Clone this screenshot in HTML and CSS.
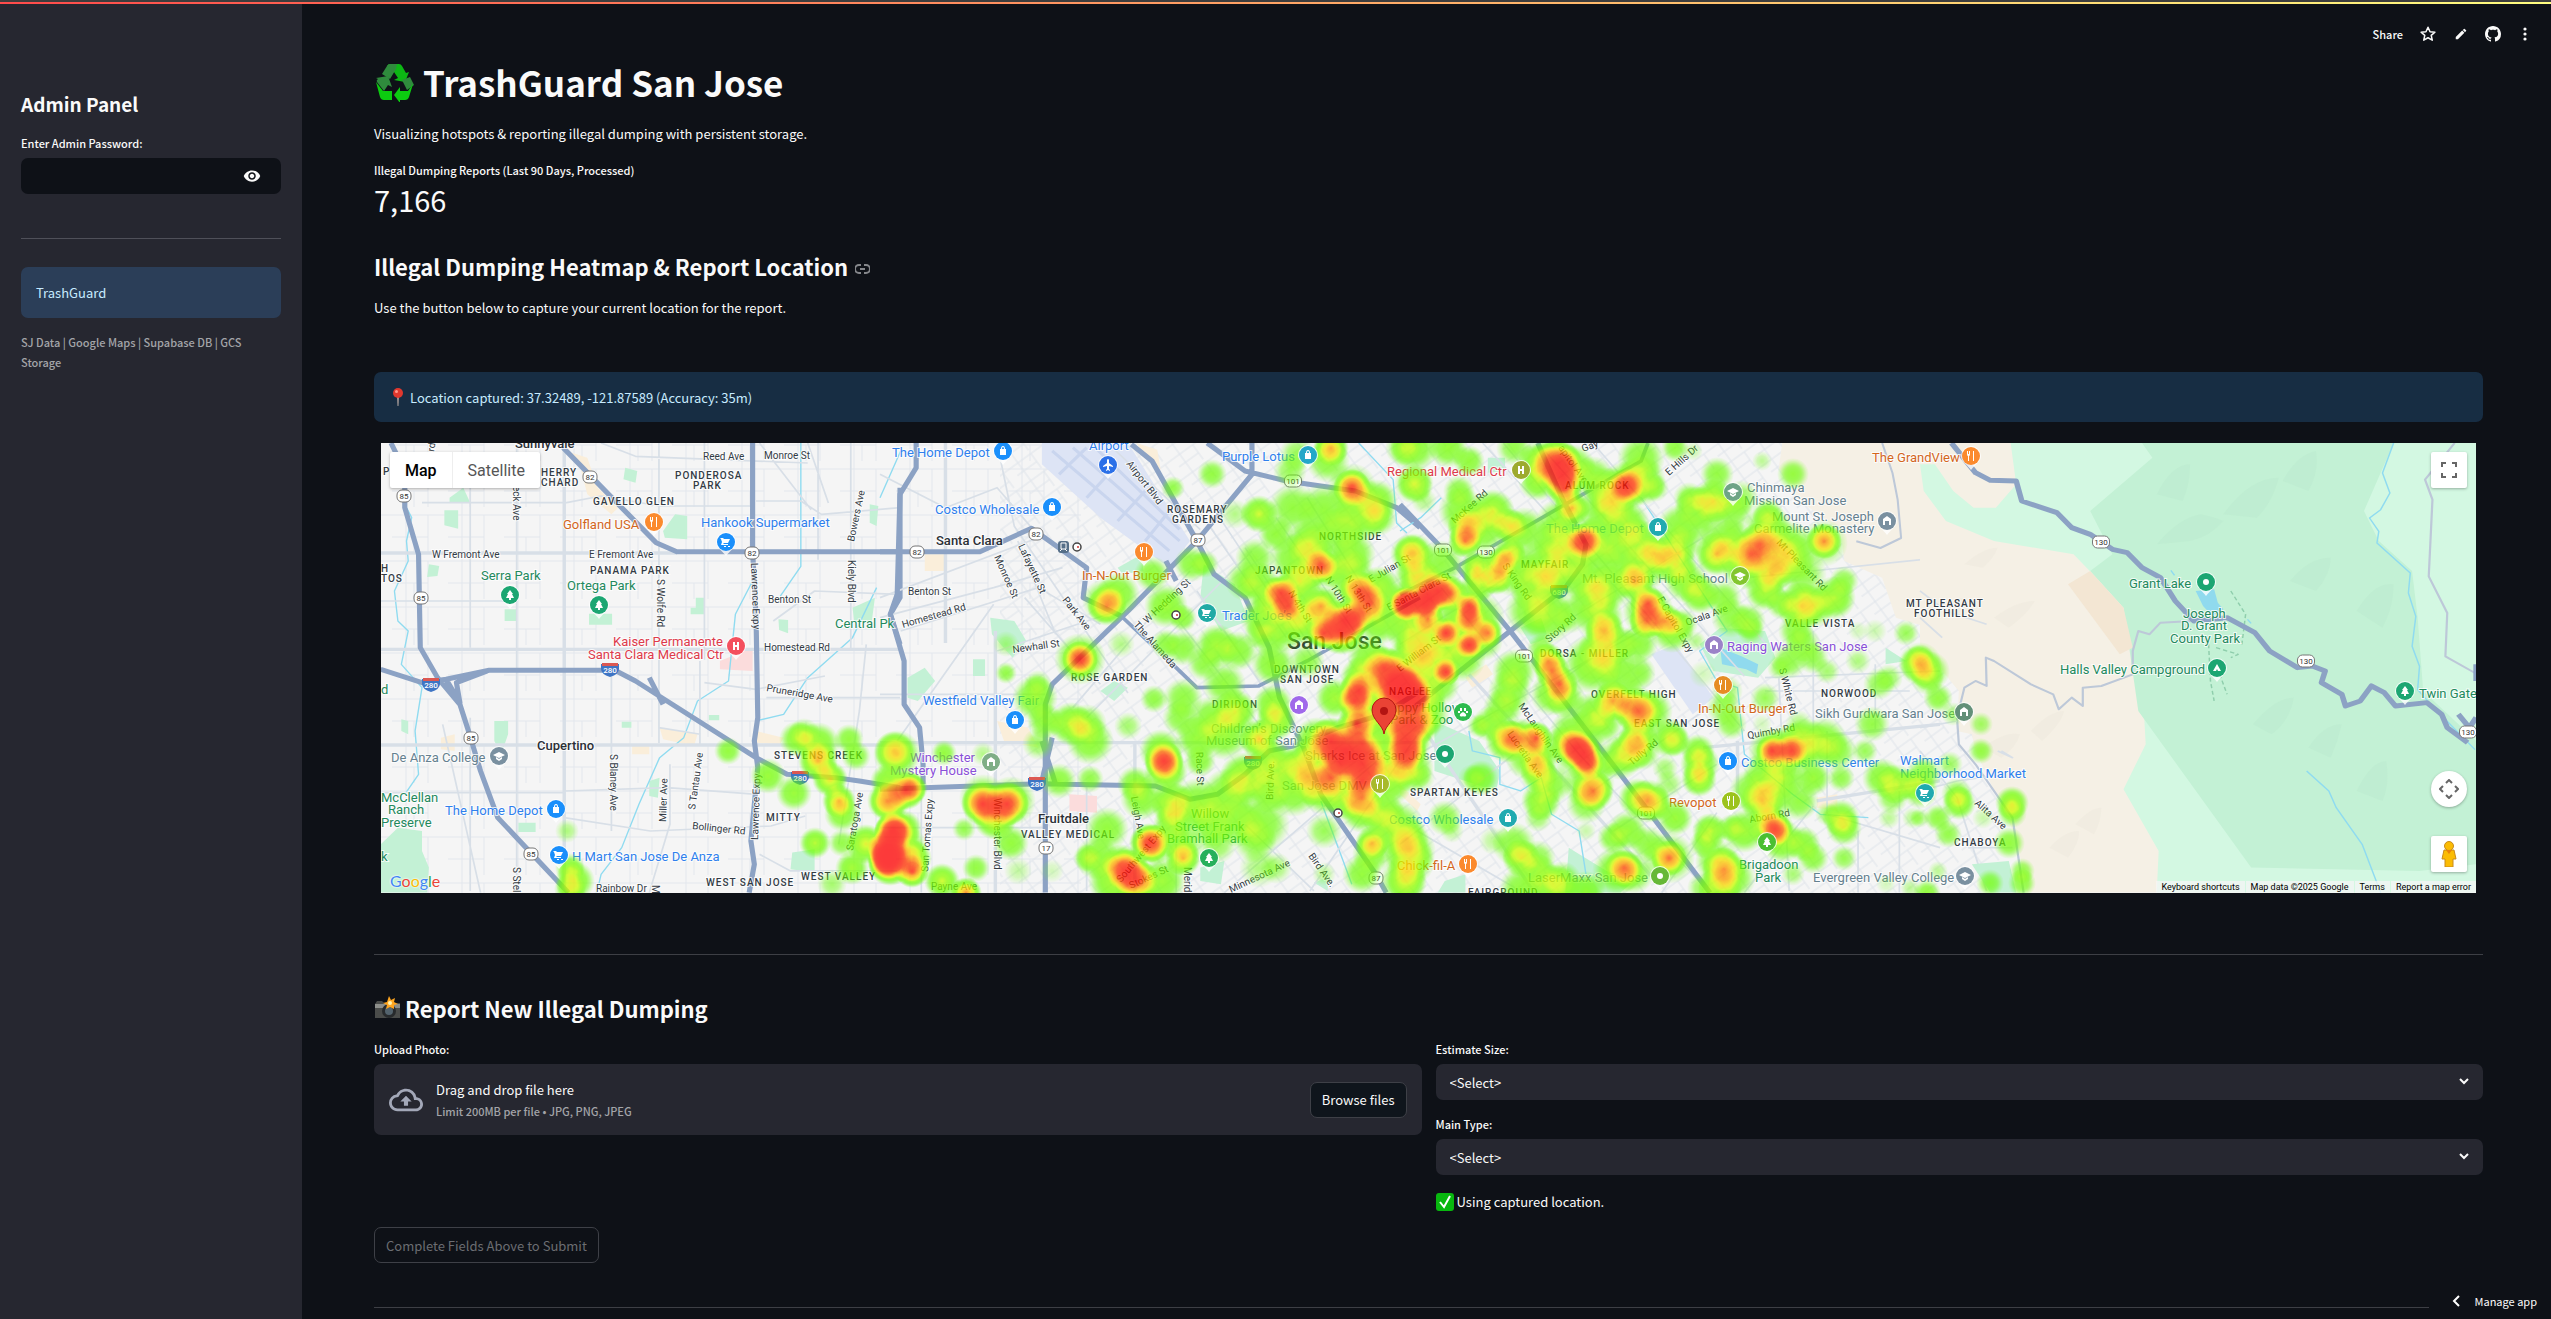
FILE: index.html
```html
<!DOCTYPE html>
<html lang="en">
<head>
<meta charset="utf-8">
<meta name="viewport" content="width=device-width, initial-scale=1">
<title>TrashGuard San Jose</title>
<link rel="stylesheet" href="styles.css">
</head>
<body>
<div class="decoration"></div>
<div class="app">
  <aside class="sidebar">
    <h2 class="sidebar-title">Admin Panel</h2>
    <label class="label" for="admin-password">Enter Admin Password:</label>
    <div class="password">
      <input id="admin-password" class="password-input" type="password">
      <button class="icon-button" type="button" aria-label="Show password">
        <svg width="18" height="18" viewBox="0 0 24 24" fill="currentColor"><path d="M12 4.500C7 4.500 2.730 7.610 1 12c1.730 4.390 6 7.500 11 7.500s9.270-3.110 11-7.500c-1.730-4.390-6-7.500-11-7.500zM12 17c-2.760 0-5-2.240-5-5s2.240-5 5-5 5 2.240 5 5-2.240 5-5 5zm0-8c-1.660 0-3 1.340-3 3s1.340 3 3 3 3-1.340 3-3-1.340-3-3-3z"/></svg>
      </button>
    </div>
    <hr class="rule sidebar-rule">
    <div class="alert alert-sidebar">TrashGuard</div>
    <p class="caption sidebar-caption">SJ Data | Google Maps | Supabase DB | GCS Storage</p>
  </aside>

  <main class="main">
    <nav class="toolbar" aria-label="App">
      <button class="tool" type="button">Share</button>
      <button class="tool" type="button" aria-label="Favorite"><svg width="18" height="18" viewBox="0 0 24 24" fill="none" stroke="currentColor" stroke-width="2" stroke-linejoin="round"><path d="M12 3l2.700 6 6.500.6-4.900 4.300 1.400 6.400L12 17l-5.700 3.300 1.400-6.400L2.800 9.600 9.300 9z"/></svg></button>
      <button class="tool" type="button" aria-label="Edit"><svg width="14" height="14" viewBox="0 0 24 24" fill="currentColor"><path d="M3 17.250V21h3.750L17.810 9.940l-3.750-3.750L3 17.250zM20.710 7.040a1 1 0 0 0 0-1.410l-2.340-2.340a1 1 0 0 0-1.410 0l-1.830 1.830 3.750 3.750 1.830-1.830z"/></svg></button>
      <button class="tool" type="button" aria-label="GitHub"><svg width="16" height="16" viewBox="0 0 16 16" fill="currentColor"><path d="M8 0C3.580 0 0 3.580 0 8c0 3.540 2.290 6.530 5.470 7.590.4.070.55-.17.55-.38 0-.19-.01-.82-.01-1.490-2.010.37-2.530-.49-2.690-.94-.09-.23-.48-.94-.82-1.130-.28-.15-.68-.52-.01-.53.63-.01 1.080.58 1.230.82.72 1.210 1.870.87 2.330.66.07-.52.28-.87.51-1.070-1.780-.2-3.640-.89-3.640-3.950 0-.87.31-1.590.82-2.150-.08-.2-.36-1.020.08-2.120 0 0 .67-.21 2.200.82.640-.18 1.320-.27 2-.27s1.360.09 2 .27c1.530-1.040 2.200-.82 2.200-.82.44 1.100.16 1.920.08 2.120.51.56.82 1.270.82 2.150 0 3.070-1.870 3.750-3.650 3.950.29.25.54.73.54 1.480 0 1.070-.01 1.930-.01 2.200 0 .21.15.46.55.38A8.010 8.010 0 0 0 16 8c0-4.420-3.580-8-8-8z"/></svg></button>
      <button class="tool" type="button" aria-label="More"><svg width="16" height="16" viewBox="0 0 16 16" fill="currentColor"><circle cx="8" cy="3" r="1.600"/><circle cx="8" cy="8" r="1.600"/><circle cx="8" cy="13" r="1.600"/></svg></button>
    </nav>

    <h1 class="title">
      <svg class="title-icon" width="41" height="40" viewBox="0 0 41 40" aria-hidden="true">
        <path d="M13 4q1-2 3-2h9q2 0 3 2l4 7 3-1-4 10-11-2 4-2-4-6z" fill="#0cb814"/>
        <path d="M13 4q1-2 3-2h7l-1 5-6 10-8-5z" fill="#2f8b3d"/>
        <path d="M2 16l12-2 4 11-4-2-4 6-7-9q-1-2 1-3z" fill="#2f8b3d"/>
        <path d="M2 20l7 9h9v9H10q-3 0-4-3z" fill="#0ccb10"/>
        <path d="M28 18l8-3 4 8-7 5z" fill="#2f8b3d"/>
        <path d="M39 22l-4 13q-1 3-4 3h-5v3l-6-8 6-8v4h8z" fill="#0ccb10"/>
      </svg>
      TrashGuard San Jose
    </h1>
    <p class="text intro">Visualizing hotspots &amp; reporting illegal dumping with persistent storage.</p>
    <div class="metric">
      <div class="label">Illegal Dumping Reports (Last 90 Days, Processed)</div>
      <div class="metric-value">7,166</div>
    </div>

    <h2 class="heading heading-map">Illegal Dumping Heatmap &amp; Report Location
      <a class="anchor" href="#heatmap" aria-label="Link to heading"><svg width="15" height="10" viewBox="0 0 15 10" fill="none" stroke="currentColor" stroke-width="2"><path d="M6 1H4a4 4 0 0 0 0 8h2M9 1h2a4 4 0 0 1 0 8H9M5 5h5"/></svg></a>
    </h2>
    <p class="text help">Use the button below to capture your current location for the report.</p>

    <div class="alert alert-location">
      <svg width="12" height="18" viewBox="0 0 12 18" aria-hidden="true"><path d="M5 9h2l-.5 9h-1z" fill="#a59a98"/><circle cx="6" cy="5" r="5" fill="#e0382e"/><circle cx="4.500" cy="3.500" r="1.500" fill="#ff9a8c"/></svg>
      Location captured: 37.32489, -121.87589 (Accuracy: 35m)
    </div>

    <section class="map" id="heatmap" aria-label="Heatmap">
      <svg class="map-canvas" viewBox="381 442 2095 450" preserveAspectRatio="xMidYMid slice">
        <defs>
          <pattern id="blocks" width="56" height="46" patternUnits="userSpaceOnUse"><path d="M0 8H56M14 0V46M36 8V46M0 30H36M22 30V46" fill="none" stroke="#e3e7ed"/></pattern>
          <pattern id="blocks-tilt" width="34" height="22" patternUnits="userSpaceOnUse" patternTransform="rotate(-36)"><path d="M0 4H34M8 0V22M24 4V22M0 14H24" fill="none" stroke="#dfe4ea"/></pattern>
          <radialGradient id="spot"><stop offset="0" stop-color="#fff"/><stop offset=".5" stop-color="#fff" stop-opacity=".7"/><stop offset="1" stop-color="#fff" stop-opacity="0"/></radialGradient>
          <filter id="heat-colours" filterUnits="userSpaceOnUse" x="381" y="442" width="2095" height="450" color-interpolation-filters="sRGB">
            <feColorMatrix values="0 0 0 1 0  0 0 0 1 0  0 0 0 0 0  0 0 0 1 0"/>
            <feComponentTransfer>
              <feFuncR type="table" tableValues=".4 .4 .4 .42 .46 .56 .8 .98 1 1 1"/>
              <feFuncG type="table" tableValues="1 1 1 1 1 1 1 .86 .6 .2 0"/>
              <feFuncA type="table" tableValues="0 .25 .6 .86 .97 1 1 1 1 1 1"/>
            </feComponentTransfer>
          </filter>
        </defs>
        <rect x="381" y="442" width="2095" height="450" fill="#f5f5f5"/>
        <rect x="381" y="442" width="700" height="450" fill="url(#blocks)"/>
        <rect x="1000" y="442" width="1000" height="450" fill="url(#blocks-tilt)"/>

        <g transform="matrix(.3444 0 0 .3333 360 430)" class="tile">
          <path class="park" d="M770 110l35 10-5 35-35-10zM260 200l40-30 20 45h-60zM245 238h40v55l-40-10zM880 300l35-50 35 5v70l-65-5zM665 548h67v33h-67zM975 500h25v50h-40v-20h15zM420 535h34v35h-34zM1430 530l65-30-10 80-50-10zM120 865l20 5v40l-20-10zM390 870h40v40l-20 60-20-40zM60 1240l50-50 70 10v60l20 50-5 75H60zM460 1175h50v28h-50zM1255 1265l65-10v70l-70-10zM1480 220l25 5-5 60-20-10zM840 1050l30-10-5 60-25-5zM760 872h28v18h-28zM1013 852h30v16h-30zM200 400l30 5-5 30-30 3zM1215 565l28 2v40l-26-10z"/>
          <path class="retail" d="M600 60l60 20 30 90 60 60-20 20-70-60-20-80zM870 890l110 20-10 35-90-20zM235 920l40-10v50l-40-5zM790 945h50v25h-50zM1150 900l80 20-10 20-70-5z"/>
          <path d="M1045 690l95-40v70l-95-5z" fill="#fbdcdc"/>
          <path class="creek" d="M120 200l30 60-15 70 5 60-40 90 10 90 30 30-20 100 60 70-20 130 10 130-40 60M1150 430l-60 120-20 200-90 60-40 110-70 60-60 140-50 130-60 80-20 90M1280 36v370l-60 90M1500 470l-70 150-130 120-70 110-80 20"/>
          <path class="street wide" d="M60 366H920M593 36V1385M60 655H1568M60 942H1568"/>
          <path class="street" d="M455 36V1385M320 120v530M320 860v520M730 720v480M868 36v900M987 690v250M1425 36v620M60 510h360M180 215h420l100-20 170 30h270M1000 755l150 20 200-40M868 890l120 20M593 1080l300-10 260 20M593 1160l250 40 350-15 100-30M1000 36v650M1150 210h130l60 40 228-20M1330 36v350M700 36l100 40 500 20M60 1085h530M240 880l110 505M1470 640l-20 200-60 400M1180 800h388M900 1000v180l-60 205M1160 1270l90 50h310M1300 36l60 180M1160 36l150 200M1200 570l120-90 240 10"/>
          <path class="highway" d="M90 36L130 120V230L170 370 175 650 225 740 290 820 315 900 350 1020 400 1160 500 1270 605 1385M60 715L180 755 250 745 375 718H740L800 750 1150 980 1240 1030 1380 1040 1450 1050 1568 1070M590 50L760 230 860 335 920 362H1568M1140 36V360L1150 560 1155 860 1145 930 1155 1010 1135 1230 1145 1300 1130 1385M1568 170V500L1540 550 1568 640M250 745l40 70-10-60 90-35M840 740l40 80"/>
        </g>
        <g transform="matrix(.3444 0 0 .3333 880 430)" class="tile">
          <path d="M470 36H720L900 330 840 410 640 260 470 100z" fill="#dde4f5"/>
          <path d="M500 60l340 300M560 50l310 280M620 45l250 250M520 130L600 50M600 200l80-90M690 270l80-90M770 330l70-90" stroke="#c9d5ee" stroke-width="9" fill="none"/>
          <path class="park" d="M320 560l70 10 35 60-40 50-60-70zM80 740l50-30 30 40-50 60-30-10zM270 685h35v50h-35zM640 780l40-30 40 20-40 40zM690 410l70-40 5 50-60 10zM940 400l90 60 40 110-80 30-60-100zM930 1310l70-20-10 70-60-10zM960 400l60 50M1260 1355l40-15v40z"/>
          <path class="retail" d="M340 870l90 20 30 60-100-20zM130 370h60v50h-60zM745 36l60 20 10 60-50-40z"/>
          <path d="M550 1090l80 5v50l-80-5z" fill="#fbdcdc"/>
          <path class="creek" d="M1390 36l100 110 10 130 30 30M1280 1110l90 250M60 60L0 200M940 1240l40-60"/>
          <path class="street wide" d="M0 935H1568M335 600V1385M740 935v450M190 36v600"/>
          <path class="street" d="M0 130l190 100 150-60 100 120M340 36l50 250 330 500M120 1385V1100M0 500l460-180M0 560l330-90 200-60M60 600l400-130 180 110M340 660l350-120M0 790h480M560 830L900 420M600 860L1080 360M50 930L330 520M860 560l240 320M920 480l220 330M1000 1385l560-500M1060 1180l200 200M980 250l320 500M900 200L1180 620M1568 900l-320 480M600 1060v320M0 1190h480M860 1100v285M420 500l220 260M400 330l110 280M660 36l270 260M1240 200l200 330M1150 260l260 390M1060 350l270 420"/>
          <path class="highway" d="M105 36V110L58 190 50 490 30 550 70 690V820L115 890 125 1000V1060M0 362H290L440 292 600 410 590 500 700 555M0 1075L470 1058 800 1065 900 1105 980 1090 1060 1030 1130 960 1200 945 1330 890 1460 850 1568 780M480 1385V820L500 760 720 540 920 330 1080 130V36M730 40L790 90 920 330 970 430 1060 500 1130 650 1160 800 1230 950 1280 1090 1440 1330 1470 1385M950 36L1060 120 1180 150 1380 180 1500 230 1568 290M470 930l40 130M500 920l-30 130M830 390l30 60"/>
          <path class="highway thin" d="M700 555L850 700 920 770 1100 765 1240 690 1568 500"/>
        </g>
        <g transform="matrix(.3444 0 0 .3333 1400 430)" class="tile">
          <path d="M1110 36L1100 110 1150 200 1280 300 1290 390 1400 440 1440 560 1568 600V36z" fill="#f5f0e5"/>
          <path d="M1510 36l20 130 40 70V36z" fill="#d3f8e2"/>
          <path class="park" d="M870 640l60-50 130 10 30 80-50 60-130-20zM100 870l130 60 60 90-10 60-180-60zM1410 650l60 40-60 10zM350 590l60-30 20 60-50 20zM490 1250l110 70 80 30-40 35H480zM130 1350l60-20v55h-80zM255 80h50v40l-50 5z"/>
          <path d="M930 650l60 25 50 25-5 30-30-15-70-15z" fill="#90daee"/>
          <path d="M730 670L800 640 910 800 850 850z" fill="#dde4f5"/>
          <path class="retail" d="M190 740l60-40 20 30-60 40zM0 1060l60 60-10 20-50-50zM1210 1100l60-10v50l-60-10z"/>
          <path class="creek" d="M0 300l60-40 60-60M700 200l250 400-80 60 50 90 60 20 20 200 140 120 80 60 140 10M200 900l10 60 80 20v80l60 20 60-40 30 110 80 50 20 130"/>
          <path class="street wide" d="M60 880l330 505M200 730l560 640M880 950L1568 880M980 930v200M1210 1110l358-60"/>
          <path class="street" d="M400 36l600 700M560 36l500 600M0 1000L700 600M300 36L1000 900M0 640L340 420M120 470l400 500 380 415M500 560L880 320M880 840L560 1080M400 800L720 560M1100 740l30 640M1200 600v400M1060 740l508-20M1060 780h420M1380 700v200M1240 900v250l328 100M1000 1385l200-260M620 1200l300-200M760 1385l160-240M1010 440l560-60M1330 1200v185M1450 1080v305M240 36l500 560M50 1200l300 180M0 1240L330 970"/>
          <path class="highway" d="M0 220L120 350 320 600 640 1030 900 1385M40 830L320 600 480 470 530 400 540 340 470 200 400 36"/>
          <path class="highway thin" d="M0 490L160 410 480 220 700 90 720 36"/>
          <path class="backroad" d="M1400 36l30 90 15 80 10 115-60 30-70-20"/>
        </g>
        <g transform="matrix(.37 0 0 .3333 1920 430)" class="tile">
          <path d="M0 36H1503V1385H290L260 1220 150 960 140 910 100 900 105 780 0 640z" fill="#f5f0e5"/>
          <path d="M245 36H1503V1385H640L645 1260 550 1075 610 940 605 840 580 660 555 530 415 370 200 330 70 270 10 180 0 100H40L90 180 145 230H205L260 160z" fill="#d3f8e2"/>
          <path d="M600 36L628 80 460 240 520 370 460 420 550 530 590 840 895 1310 1350 1320 1503 1300V36z" fill="#c3f1d5"/>
          <path d="M1280 36L1200 240 1240 330 1330 420 1345 560 1360 780 1503 930V36z" fill="#d3f8e2"/>
          <path d="M400 460L460 420 550 530 575 650 540 670z" fill="#f3e6d3"/>
          <path class="relief" d="M120 400q50-50 90-50-10 30-40 60zM200 560q60-50 110-50-20 40-70 80zM170 950q60-50 100-40-10 40-50 70zM300 900q50-60 90-60-10 40-60 90zM420 1180q40-50 70-50 0 40-20 80zM350 1250q40-50 80-50 0 40-30 80zM60 540q30-40 60-40-10 40-20 60z"/>
          <path class="relief-green" d="M640 340q60-80 120-90 40 10 60 20-40 50-90 60zM820 250q70-110 150-110-20 80-60 120zM980 150q40-80 90-90 10 60-20 120zM1000 450q50-70 110-70 0 50-40 100zM900 880q60-80 110-80-10 70-60 110zM1050 950q40-70 90-70-10 50-30 100zM1180 540q50-90 100-80 0 70-30 130zM1180 1080q40-90 80-90 10 70-10 120zM640 190q40-90 90-90 0 60-20 110z"/>
          <path d="M745 480l50-5 10 40 15 20-30 20-25-30z" fill="#90daee"/>
          <path class="creek" d="M1280 36l-30 90 20 60-25 50-30 25 25 40-5 35 90 90-5 60 20 70-10 90 20 60-5 70 40 50 115 130M1045 1020l60 60 20 50 70 110 50 145M678 418l10 15M885 565l10 12"/>
          <path class="trail" d="M780 640l5 110 10 60M840 480l40 70-10 90M800 650l60 20-20 10M810 730l20 60"/>
          <path class="backroad" d="M735 570L650 575 620 610 590 600 575 660V730L490 765 440 770V825L410 800 375 835 360 790 300 760 200 690 178 680 180 765 150 750 120 770 100 860 105 940 150 1000 250 1160 280 1385M1445 36l-80 110 20 60-10 230 50 110-5 130 80 50"/>
          <path class="street" d="M0 890l100-20M0 1080l100-30 130-20M0 960l100 140 80 280M60 620L0 560M0 480l70 60 110 40M210 960l40 20-30-20M130 1250h120"/>
          <path class="highway" d="M85 36L150 125 190 148 260 150 275 210 370 245 410 290 460 310 520 355 560 365 600 410 650 440 690 510 740 570 830 560 905 605 945 660 1020 710 1060 705 1095 720 1085 755 1140 790 1150 825 1190 810 1220 765 1255 785 1285 825 1370 815 1410 850 1425 890 1480 935M1503 700v50M1455 850l30 40 18-30"/>
          <path class="park" d="M140 1300l100-10 20 95h-70z"/>
        </g>
        <g id="labels"></g>
        <g id="heat" filter="url(#heat-colours)" opacity=".76"></g>
        <g id="pins"></g>
        <path d="M1384 733c-1-9-12-14-12-24a12 12 0 0 1 24 0c0 10-11 15-12 24z" fill="#ea4335" stroke="#b31412"/>
        <circle cx="1384" cy="710" r="4" fill="#b31412"/>
      </svg>
      <div class="map-types">
        <button class="map-type map-type-on" type="button">Map</button>
        <button class="map-type" type="button">Satellite</button>
      </div>
      <button class="map-control" type="button" aria-label="Toggle fullscreen view"><svg width="16" height="16" viewBox="0 0 16 16" fill="none" stroke="#666" stroke-width="2"><path d="M1 5V1h4M11 1h4v4M15 11v4h-4M5 15H1v-4"/></svg></button>
      <div class="map-tools">
        <button class="map-control map-pan" type="button" aria-label="Map camera controls"><svg width="20" height="20" viewBox="0 0 20 20" fill="none" stroke="#666" stroke-width="2"><path d="M7 4l3-3 3 3M7 16l3 3 3-3M4 7l-3 3 3 3M16 7l3 3-3 3"/></svg></button>
        <button class="map-control" type="button" aria-label="Street View"><svg width="16" height="26" viewBox="0 0 16 26"><path d="M3 9h10l2 9h-3v8H4v-8H1z" fill="#fbbc04" stroke="#c88a1c"/><circle cx="8" cy="5" r="4.500" fill="#fbbc04" stroke="#c88a1c"/><path d="M5 9h6l-3 4z" fill="#e8810c"/></svg></button>
      </div>
      <div class="google" aria-label="Google"><span class="g-blue">G</span><span class="g-red">o</span><span class="g-yellow">o</span><span class="g-blue">g</span><span class="g-green">l</span><span class="g-red">e</span></div>
      <div class="map-footer">
        <button class="map-note" type="button">Keyboard shortcuts</button>
        <span class="map-note">Map data ©2025 Google</span>
        <a class="map-note" href="#terms">Terms</a>
        <a class="map-note" href="#report">Report a map error</a>
      </div>
    </section>

    <hr class="rule rule-form">

    <h2 class="heading heading-form">
      <svg width="27" height="24" viewBox="0 0 27 24" aria-hidden="true"><path d="M1 8l2-3h5l2 2h16v15H1z" fill="#4a4c4a"/><path d="M1 8h25v4H1z" fill="#8d8f8b"/><circle cx="15" cy="15" r="7" fill="#272a2c"/><circle cx="15" cy="15" r="4" fill="#53636d"/><path d="M15 0l2 4 4-2-1 4 4 2-4 1 0 4-4-2-4 2 1-4-4-2 4-1z" fill="#ffa51f"/><circle cx="16" cy="7" r="2" fill="#fff3b0"/></svg>
      Report New Illegal Dumping
    </h2>

    <form class="form">
      <div class="columns">
        <div class="field">
          <label class="label" for="photo">Upload Photo:</label>
          <div class="dropzone">
            <svg width="34" height="34" viewBox="0 0 24 24" fill="#a3a8b8" aria-hidden="true"><path d="M19.350 10.040A7.490 7.490 0 0 0 12 4C9.110 4 6.600 5.640 5.350 8.040A5.994 5.994 0 0 0 0 14c0 3.310 2.690 6 6 6h13c2.760 0 5-2.240 5-5 0-2.640-2.050-4.780-4.650-4.960zM19 18H6c-2.210 0-4-1.790-4-4 0-2.050 1.530-3.760 3.560-3.970l1.070-.11.5-.95A5.469 5.469 0 0 1 12 6c2.620 0 4.880 1.860 5.390 4.430l.3 1.500 1.530.11A2.980 2.980 0 0 1 22 15c0 1.650-1.350 3-3 3zM8 13h2.550v3h2.900v-3H16l-4-4z"/></svg>
            <div class="drop-copy">
              <span class="text">Drag and drop file here</span>
              <span class="caption">Limit 200MB per file • JPG, PNG, JPEG</span>
            </div>
            <input id="photo" class="file-input" type="file" accept=".jpg,.png,.jpeg">
            <button class="button browse" type="button">Browse files</button>
          </div>
        </div>
        <div class="stack">
          <div class="field">
            <label class="label" for="size">Estimate Size:</label>
            <div class="select-wrap"><select class="select" id="size"><option>&lt;Select&gt;</option></select><svg class="chevron" width="10" height="7" viewBox="0 0 10 7"><path d="M1 1l4 4 4-4" fill="none" stroke="currentColor" stroke-width="2"/></svg></div>
          </div>
          <div class="field">
            <label class="label" for="type">Main Type:</label>
            <div class="select-wrap"><select class="select" id="type"><option>&lt;Select&gt;</option></select><svg class="chevron" width="10" height="7" viewBox="0 0 10 7"><path d="M1 1l4 4 4-4" fill="none" stroke="currentColor" stroke-width="2"/></svg></div>
          </div>
          <p class="text status"><svg width="18" height="18" viewBox="0 0 18 18" aria-hidden="true"><rect width="18" height="18" rx="3" fill="#08b80f"/><path d="M4 9l4 5 6-11" fill="none" stroke="#fff" stroke-width="2"/></svg>Using captured location.</p>
        </div>
      </div>
      <button class="button submit" type="submit" disabled>Complete Fields Above to Submit</button>
    </form>
    <hr class="rule rule-end">
  </main>
</div>
<button class="manage" type="button"><svg width="8" height="12" viewBox="0 0 8 12" fill="none" stroke="#fff" stroke-width="2"><path d="M7 1L2 6l5 5"/></svg>Manage app</button>
<script src="map.js"></script>
</body>
</html>
```

FILE: styles.css
```css
* { box-sizing: border-box; }
body {
  margin: 0;
  background: #0e1117;
  color: #fafafa;
  font-family: "Noto Sans CJK JP", "Noto Sans", sans-serif;
  font-size: 13px;
  line-height: 23px;
  font-weight: 400;
}
h1, h2, p { margin: 0; }
button, input, select { font: inherit; color: inherit; margin: 0; }
button { border: 0; background: none; padding: 0; cursor: pointer; }
svg { flex: none; }

.decoration {
  position: fixed; top: 0; left: 0; right: 0; z-index: 5;
  height: 4px;
  border-top: 2px solid #3d3d3d;
  background: linear-gradient(90deg, #ff4b4b, #fffd80) padding-box;
}
.app { display: flex; min-height: 100vh; }

.sidebar { flex: 0 0 302px; background: #262730; padding: 90px 21px 0; }
.sidebar-title { font-size: 19px; line-height: 28px; font-weight: 700; margin-bottom: 16px; }
.label { display: block; font-size: 11px; line-height: 18px; font-weight: 500; }
.password { display: flex; align-items: center; height: 36px; margin-top: 6px; padding-right: 20px; border-radius: 7px; background: #0e1117; }
.password-input { flex: 1; min-width: 0; height: 36px; padding: 0 12px; border: 0; background: none; outline: 0; }
.icon-button { display: flex; }
.rule { height: 1px; border: 0; margin: 0; background: #3d3f45; }
.sidebar-rule { margin: 44px 0 28px; background: #4f5059; }
.alert { border-radius: 7px; color: #c7ebff; background: #172d43; display: flex; align-items: center; }
.alert-sidebar { height: 51px; padding: 0 15px; background: #2b3e58; }
.caption { font-size: 11px; line-height: 20px; color: #a3a4a8; font-weight: 500; }
.sidebar-caption { margin-top: 14px; }

.main { position: relative; flex: 1; min-width: 0; padding: 58px 68px 0 72px; }
.toolbar { position: absolute; top: 22px; right: 18px; display: flex; align-items: center; gap: 16px; height: 24px; }
.tool { display: flex; align-items: center; justify-content: center; min-width: 16px; font-size: 11px; font-weight: 500; }
.title { display: flex; align-items: center; gap: 8px; font-size: 35px; line-height: 48px; font-weight: 700; }
.intro { margin-top: 16px; }
.metric { margin-top: 16px; }
.metric-value { font-size: 29px; line-height: 40px; }
.heading { display: flex; align-items: center; gap: 4px; font-size: 22px; line-height: 30px; font-weight: 700; }
.heading-map { margin-top: 32px; gap: 7px; }
.anchor { display: flex; color: #85878b; padding-top: 5px; }
.help { margin-top: 15px; }
.alert-location { height: 50px; margin-top: 53px; padding: 0 18px; gap: 6px; }

.map { position: relative; height: 450px; margin: 21px 7px 0; overflow: hidden; font-family: Roboto, sans-serif; }
.map-canvas { display: block; width: 100%; height: 450px; }
.tile path { stroke-linejoin: round; }
.park { fill: #c3f1d5; }
.retail { fill: #faeeda; }
.relief { fill: #eee9de; opacity: .6; }
.relief-green { fill: #b8e9cd; opacity: .4; }
.creek { fill: none; stroke: #8fdbf0; stroke-width: 4px; }
.trail { fill: none; stroke: #8fceac; stroke-width: 4px; stroke-dasharray: 12 8; }
.street { fill: none; stroke: #d8dfe7; stroke-width: 5px; }
.street.wide { stroke-width: 10px; }
.backroad { fill: none; stroke: #bdc8d8; stroke-width: 6px; }
.highway { fill: none; stroke: #8ca2c4; stroke-width: 15px; }
.highway.thin { stroke-width: 11px; }
.lbl { fill: #333b45; stroke: #fff; stroke-width: 2px; stroke-opacity: .8; paint-order: stroke; font-size: 10px; }
.lbl-area { font-size: 10px; font-weight: 500; letter-spacing: 1px; }
.lbl-town { font-size: 13px; font-weight: 500; fill: #2b2f36; }
.lbl-city { font-size: 23px; font-weight: 500; fill: #30343a; }
.lbl-poi { font-size: 13px; }
.lbl-shop { fill: #2f80ed; }
.lbl-food { fill: #d3661c; }
.lbl-park { fill: #23895d; }
.lbl-med { fill: #de3a4b; }
.lbl-civic { fill: #65808f; }
.lbl-fun { fill: #8a4fd8; }
.lbl-shield { font-size: 8px; fill: #333; text-anchor: middle; stroke: none; }
.lbl-interstate { font-size: 8px; fill: #fff; text-anchor: middle; stroke: none; font-weight: 500; }

.map-types { position: absolute; top: 9px; left: 9px; display: flex; height: 36px; border-radius: 2px; background: #fff; box-shadow: 0 1px 3px rgba(0,0,0,.3); }
.map-type { padding: 0 15px; font-size: 16px; color: #565656; }
.map-type-on { color: #000; font-weight: 500; border-right: 1px solid #eee; }
.map-control { position: absolute; top: 9px; right: 9px; width: 36px; height: 36px; display: flex; align-items: center; justify-content: center; border-radius: 2px; background: #fff; box-shadow: 0 1px 3px rgba(0,0,0,.3); }
.map-tools { position: absolute; right: 9px; bottom: 21px; display: flex; flex-direction: column; gap: 29px; }
.map-tools .map-control { position: static; }
.map-tools .map-pan { border-radius: 50%; }
.google { position: absolute; left: 9px; bottom: 1px; font-family: Lato, sans-serif; font-size: 16px; line-height: 22px; text-shadow: 0 0 2px #fff, 0 0 2px #fff; }
.g-blue { color: #4285f4; } .g-red { color: #ea4335; } .g-yellow { color: #fbbc04; } .g-green { color: #34a853; }
.map-footer { position: absolute; right: 0; bottom: 0; display: flex; gap: 1px; }
.map-note { height: 12px; padding: 0 5px; background: rgba(245,245,245,.75); font-size: 9px; line-height: 12px; color: #000; text-decoration: none; }

.rule-form { margin: 61px 0 38px; }
.columns { display: grid; grid-template-columns: 1fr 1fr; gap: 14px; margin-top: 17px; }
.stack { display: flex; flex-direction: column; gap: 15px; }
.dropzone { display: flex; align-items: center; height: 71px; margin-top: 6px; padding: 0 15px; gap: 13px; border-radius: 7px; background: #262730; }
.drop-copy { display: flex; flex-direction: column; flex: 1; }
.file-input { position: absolute; width: 1px; height: 1px; opacity: 0; }
.button { height: 36px; border: 1px solid #3e4047; border-radius: 7px; background: #0f151c; padding: 0 11px; }
.select-wrap { position: relative; margin-top: 6px; }
.select { display: block; width: 100%; height: 36px; padding: 0 14px; border: 0; border-radius: 7px; background: #262730; appearance: none; }
.chevron { position: absolute; right: 14px; top: 14px; pointer-events: none; }
.status { display: flex; align-items: center; gap: 3px; }
.submit { display: block; margin-top: 14px; background: none; color: #6b6d72; }
.rule-end { margin-top: 44px; }
.manage { position: fixed; right: 0; bottom: 0; height: 36px; padding: 0 14px 0 23px; display: flex; align-items: center; gap: 15px; background: #0e1117; font-size: 11px; }
```

FILE: map.js
```js
// Each tile has its own origin and its own units per map pixel.
const TILES = {
  a: { x: 360, k: 2.904 },
  b: { x: 880, k: 2.904 },
  c: { x: 1400, k: 2.904 },
  d: { x: 1920, k: 2.703 }
};
const NS = 'http://www.w3.org/2000/svg';
const at = (t, x, y) => [Math.round(TILES[t].x + x / TILES[t].k), Math.round(430 + y / 3)];

function add(parent, name, attrs, text) {
  const el = document.createElementNS(NS, name);
  for (const key in attrs) el.setAttribute(key, attrs[key]);
  if (text) el.textContent = text;
  parent.appendChild(el);
  return el;
}

// tile, left edge, baseline, kind, text, rotation
const LABELS = [
  ['a', 450, 52, 'town', 'Sunnyvale'], ['a', 68, 132, 'area', 'P'], ['a', 526, 136, 'area', 'HERRY'], ['a', 526, 166, 'area', 'CHARD'],
  ['a', 996, 87, '', 'Reed Ave'], ['a', 1173, 85, '', 'Monroe St'], ['a', 915, 144, 'area', 'PONDEROSA'], ['a', 968, 174, 'area', 'PARK'],
  ['a', 677, 222, 'area', 'GAVELLO GLEN'], ['a', 598, 294, 'poi lbl-food', 'Golfland USA'], ['a', 990, 288, 'poi lbl-shop', 'Hankook Supermarket'],
  ['a', 208, 380, '', 'W Fremont Ave'], ['a', 664, 380, '', 'E Fremont Ave'], ['a', 669, 430, 'area', 'PANAMA PARK'],
  ['a', 62, 424, 'area', 'H'], ['a', 60, 454, 'area', 'TOS'], ['a', 352, 447, 'poi lbl-park', 'Serra Park'], ['a', 601, 477, 'poi lbl-park', 'Ortega Park'],
  ['a', 445, 165, '', 'eck Ave', 90], ['a', 215, 64, '', 'rd', -80], ['a', 862, 445, '', 'S Wolfe Rd', 90], ['a', 1135, 395, '', 'Lawrence Expy', 88],
  ['a', 1434, 332, '', 'Bowers Ave', -78], ['a', 1418, 388, '', 'Kiely Blvd', 90], ['a', 1185, 515, '', 'Benton St'], ['a', 1380, 592, 'poi lbl-park', 'Central Pk'],
  ['a', 744, 646, 'poi lbl-med', 'Kaiser Permanente'], ['a', 672, 684, 'poi lbl-med', 'Santa Clara Medical Ctr'], ['a', 1174, 660, '', 'Homestead Rd'],
  ['a', 1180, 780, '', 'Pruneridge Ave', 10], ['a', 62, 790, 'poi lbl-park', 'd'], ['a', 99, 994, 'poi lbl-civic', 'De Anza College'], ['a', 515, 956, 'town', 'Cupertino'],
  ['a', 726, 970, '', 'S Blaney Ave', 90], ['a', 890, 1172, '', 'Miller Ave', -88], ['a', 972, 1138, '', 'S Tantau Ave', -82], ['a', 1203, 985, 'area', 'STEVENS CREEK'],
  ['a', 1156, 1228, '', 'Lawrence Expy', -88], ['a', 1180, 1171, 'area', 'MITTY'], ['a', 965, 1194, '', 'Bollinger Rd', 6], ['a', 1432, 1260, '', 'Saratoga Ave', -80],
  ['a', 256, 1153, 'poi lbl-shop', 'The Home Depot'], ['a', 617, 1290, 'poi lbl-shop', 'H Mart San Jose De Anza'],
  ['a', 62, 1112, 'poi lbl-park', 'McClellan'], ['a', 80, 1150, 'poi lbl-park', 'Ranch'], ['a', 62, 1188, 'poi lbl-park', 'Preserve'], ['a', 62, 1290, 'poi lbl-park', 'k'],
  ['a', 445, 1308, '', 'S Stel', 90], ['a', 685, 1382, '', 'Rainbow Dr'], ['a', 848, 1362, '', 'M', 90], ['a', 1006, 1364, 'area', 'WEST SAN JOSE'], ['a', 1280, 1348, 'area', 'WEST VALLEY'],

  ['b', 43, 79, 'poi lbl-shop', 'The Home Depot'], ['b', 608, 56, 'poi lbl-shop', 'Airport'], ['b', 715, 98, '', 'Airport Blvd', 52], ['b', 1003, 91, 'poi lbl-shop', 'Purple Lotus'],
  ['b', 167, 248, 'poi lbl-shop', 'Costco Wholesale'], ['b', 163, 341, 'town', 'Santa Clara'], ['b', 834, 246, 'area', 'ROSEMARY'], ['b', 847, 276, 'area', 'GARDENS'],
  ['b', 1276, 327, 'area', 'NORTHSIDE'], ['b', 1090, 430, 'area', 'JAPANTOWN'], ['b', 588, 447, 'poi lbl-food', 'In-N-Out Burger'], ['b', 992, 566, 'poi lbl-shop', 'Trader Joe’s'],
  ['b', 332, 378, '', 'Monroe St', 66], ['b', 402, 345, '', 'Lafayette St', 65], ['b', 82, 492, '', 'Benton St'], ['b', 66, 590, '', 'Homestead Rd', -16], ['b', 528, 508, '', 'Park Ave', 52],
  ['b', 385, 665, '', 'Newhall St', -8], ['b', 775, 578, '', 'W Hedding St', -43], ['b', 736, 582, '', 'The Alameda', 48], ['b', 1183, 655, 'city', 'San Jose'],
  ['b', 555, 751, 'area', 'ROSE GARDEN'], ['b', 1145, 726, 'area', 'DOWNTOWN'], ['b', 1163, 756, 'area', 'SAN JOSE'], ['b', 134, 822, 'poi lbl-shop', 'Westfield Valley Fair'],
  ['b', 965, 831, 'area', 'DIRIDON'], ['b', 962, 906, 'poi lbl-civic', 'Children’s Discovery'], ['b', 947, 943, 'poi lbl-civic', 'Museum of San Jose'],
  ['b', 97, 994, 'poi lbl-fun', 'Winchester'], ['b', 37, 1032, 'poi lbl-fun', 'Mystery House'], ['b', 1233, 988, 'poi lbl-civic', 'Sharks Ice at San Jose'], ['b', 1176, 1076, 'poi lbl-civic', 'San Jose DMV'],
  ['b', 1477, 791, 'area', 'NAGLEE'], ['b', 1455, 843, 'poi lbl-park', 'Happy Hollow'], ['b', 1480, 880, 'poi lbl-park', 'Park & Zoo'],
  ['b', 1425, 455, '', 'E Julian St', -30], ['b', 1478, 540, '', 'E Santa Clara St', -28], ['b', 1510, 722, '', 'E William St', -38],
  ['b', 1293, 445, '', 'N 10th St', 58], ['b', 1350, 440, '', 'N 13th St', 58], ['b', 1185, 485, '', 'N 4th St', 58],
  ['b', 918, 962, '', 'Race St', 88], ['b', 1140, 1108, '', 'Bird Ave.', -88], ['b', 140, 1322, '', 'San Tomas Expy', -86], ['b', 330, 1100, '', 'Winchester Blvd', 90],
  ['b', 459, 1176, 'town', 'Fruitdale'], ['b', 409, 1222, 'area', 'VALLEY MEDICAL'], ['b', 730, 1098, '', 'Leigh Ave', 80], ['b', 700, 1355, '', 'Southwest Expy', -50], ['b', 730, 1375, '', 'Stokes St', -25],
  ['b', 902, 1161, 'poi lbl-park', 'Willow'], ['b', 857, 1199, 'poi lbl-park', 'Street Frank'], ['b', 843, 1237, 'poi lbl-park', 'Bramhall Park'],
  ['b', 149, 1376, '', 'Payne Ave'], ['b', 882, 1308, '', 'Meridi', 90], ['b', 1018, 1385, '', 'Minnesota Ave', -25], ['b', 1243, 1275, '', 'Bird Ave.', 55],

  ['c', -30, 134, 'poi lbl-med', 'Regional Medical Ctr'], ['c', 460, 52, '', 'apitol Ave', 55], ['c', 530, 64, '', 'Gay', -20], ['c', 780, 136, '', 'E Hills Dr', -42],
  ['c', 480, 174, 'area', 'ALUM ROCK'], ['c', 160, 278, '', 'McKee Rd', -42], ['c', 1007, 183, 'poi lbl-civic', 'Chinmaya'], ['c', 1007, 221, 'poi lbl-civic', 'Mission San Jose'],
  ['c', 1089, 269, 'poi lbl-civic', 'Mount St. Joseph'], ['c', 1036, 307, 'poi lbl-civic', 'Carmelite Monastery'], ['c', 432, 306, 'poi lbl-shop', 'The Home Depot'], ['c', 1370, 94, 'poi lbl-food', 'The GrandView'],
  ['c', 352, 411, 'area', 'MAYFAIR'], ['c', 537, 455, 'poi lbl-civic', 'Mt. Pleasant High School'], ['c', 295, 405, '', 'S King Rd', 55], ['c', 1093, 335, '', 'Mt Pleasant Rd', 46],
  ['c', 745, 505, '', 'E Capitol Expy', 60], ['c', 833, 585, '', 'Ocala Ave', -20], ['c', 434, 635, '', 'Story Rd', -42], ['c', 1117, 589, 'area', 'VALLE VISTA'],
  ['c', 1468, 527, 'area', 'MT PLEASANT'], ['c', 1494, 557, 'area', 'FOOTHILLS'], ['c', 407, 678, 'area', 'DORSA - MILLER'], ['c', 951, 660, 'poi lbl-fun', 'Raging Waters San Jose'],
  ['c', 554, 802, 'area', 'OVERFELT HIGH'], ['c', 866, 846, 'poi lbl-food', 'In-N-Out Burger'], ['c', 1100, 715, '', 'S White Rd', 76], ['c', 1223, 797, 'area', 'NORWOOD'],
  ['c', 1206, 862, 'poi lbl-civic', 'Sikh Gurdwara San Jose'], ['c', 680, 888, 'area', 'EAST SAN JOSE'], ['c', 1010, 925, '', 'Quimby Rd', -10], ['c', 343, 825, '', 'McLaughlin Ave', 55], ['c', 310, 910, '', 'Lucretia Ave', 55],
  ['c', 675, 1005, '', 'Tully Rd', -40], ['c', 991, 1008, 'poi lbl-shop', 'Costco Business Center'], ['c', 1453, 1002, 'poi lbl-shop', 'Walmart'], ['c', 1453, 1040, 'poi lbl-shop', 'Neighborhood Market'],
  ['c', 28, 1096, 'area', 'SPARTAN KEYES'], ['c', 790, 1128, 'poi lbl-food', 'Revopot'], ['c', 1015, 1175, '', 'Aborn Rd', -10], ['c', -22, 1180, 'poi lbl-shop', 'Costco Wholesale'],
  ['c', 0, 1317, 'poi lbl-food', 'Chick-fil-A'], ['c', 380, 1352, 'poi lbl-civic', 'LaserMaxx San Jose'], ['c', 985, 1315, 'poi lbl-park', 'Brigadoon'], ['c', 1031, 1352, 'poi lbl-park', 'Park'],
  ['c', 1200, 1352, 'poi lbl-civic', 'Evergreen Valley College'], ['c', 198, 1396, 'area', 'FAIRGROUND'],

  ['d', 573, 471, 'poi lbl-park', 'Grant Lake'], ['d', 712, 561, 'poi lbl-park', 'Joseph'], ['d', 706, 598, 'poi lbl-park', 'D. Grant'], ['d', 677, 636, 'poi lbl-park', 'County Park'],
  ['d', 387, 730, 'poi lbl-park', 'Halls Valley Campground'], ['d', 1348, 800, 'poi lbl-park', 'Twin Gates'], ['d', 145, 1120, '', 'Alita Ave', 42], ['d', 91, 1244, 'area', 'CHABOYA']
];

const SHIELDS = [
  ['a', 128, 196, '85'], ['a', 176, 502, '85'], ['a', 322, 921, '85'], ['a', 496, 1269, '85'], ['a', 669, 139, '82'], ['a', 1138, 365, '82'],
  ['b', 108, 362, '82'], ['b', 454, 309, '82'], ['b', 923, 328, '87'], ['b', 483, 1250, '17'], ['b', 1441, 1341, '87'], ['b', 1200, 149, '101'],
  ['c', 126, 357, '101'], ['c', 251, 362, '130'], ['c', 361, 674, '101'], ['c', 713, 1146, '101'],
  ['d', 490, 333, '130'], ['d', 1044, 691, '130'], ['d', 1480, 902, '130'],
  ['a', 206, 762, '280', 1], ['a', 726, 718, '280', 1], ['a', 1277, 1040, '280', 1], ['b', 456, 1058, '280', 1], ['b', 1084, 995, '280', 1], ['c', 463, 483, '680', 1]
];

// tile, centre x, centre y, colour, glyph
const SHOP = '#1a8ffb', FOOD = '#fb8a2e', PARK = '#1ca672', CIVIC = '#7a90a0', FUN = '#a069ea', MED = '#f4505e';
const PINS = [
  ['a', 853, 273, FOOD, 'fork'], ['a', 1063, 333, SHOP, 'cart'], ['a', 436, 492, PARK, 'tree'], ['a', 694, 522, PARK, 'tree'], ['a', 1091, 646, MED, 'h'],
  ['a', 404, 976, CIVIC, 'cap'], ['a', 569, 1134, SHOP, 'bag'], ['a', 578, 1273, SHOP, 'cart'],
  ['b', 356, 60, SHOP, 'bag'], ['b', 662, 102, '#2b70e8', 'plane'], ['b', 1243, 72, '#24a7c8', 'bag'], ['b', 500, 229, SHOP, 'bag'], ['b', 766, 363, FOOD, 'fork'],
  ['b', 951, 547, '#20aaa5', 'cart'], ['b', 393, 867, SHOP, 'bag'], ['b', 1217, 822, FUN, 'home'], ['b', 323, 994, '#7fae86', 'home'], ['b', 954, 1282, '#27b05c', 'tree'], ['b', 1452, 1060, '#a8b92b', 'fork'],
  ['c', 350, 116, '#9daa2e', 'h'], ['c', 748, 287, '#20aab0', 'bag'], ['c', 968, 183, '#6ea486', 'cap'], ['c', 1414, 269, CIVIC, 'home'], ['c', 986, 436, '#83c630', 'cap'],
  ['c', 913, 641, '#9b83c8', 'home'], ['c', 938, 762, '#e68c24', 'fork'], ['c', 182, 843, '#2dbb4e', 'paw'], ['c', 130, 970, PARK, 'dot'], ['c', 952, 989, SHOP, 'bag'],
  ['c', 962, 1110, '#9cc31d', 'fork'], ['c', 1526, 1086, '#20aab0', 'cart'], ['c', 313, 1161, '#20aab0', 'bag'], ['c', 198, 1299, FOOD, 'fork'], ['c', 1067, 1232, '#4abf32', 'tree'], ['c', 756, 1334, '#66b838', 'dot'],
  ['d', 137, 75, FOOD, 'fork'], ['d', 773, 452, PARK, 'dot'], ['d', 804, 711, PARK, 'tent'], ['d', 1310, 781, PARK, 'tree'], ['d', 120, 843, '#639078', 'home'], ['d', 122, 1334, CIVIC, 'cap']
];
const GLYPHS = {
  fork: 'M-4-5v3q0 2 1 2v5h1V0q1 0 1-2v-3h-1v3h-1v-3zM2-5v10h1v-10z',
  cart: 'M-5-4h2l1 1h6l-2 4h-4l-1 1h5v1h-7l1-3-1-3h-1zM-2 4h2v1h-2zM2 4h2v1h-2z',
  tree: 'M0-5l3 4H2l2 4H1v2h-2V3h-3l2-4h-1z',
  bag: 'M-3-2h1q0-3 2-3t2 3h1v6h-6zM-1-2h2q0-2-1-2t-1 2z',
  h: 'M-3-4h2v3h2v-3h2v8H1V1h-2v3h-2z',
  cap: 'M0-4l6 3-6 3-6-3zM-3 1l3 2 3-2v2L0 5l-3-2z',
  plane: 'M-1-5q1-2 2 0v3l4 3v1L1 1v3l1 1v1L0 5l-2 1V5l1-1V1l-4 1V1l4-3z',
  home: 'M-4-2l4-3 4 3v6H2V0h-4v4h-2z',
  tent: 'M0-4l4 7h-3L0 1l-1 2h-3z',
  paw: 'M0 0q4 2 3 4-2 1-3 0-1 1-3 0-1-2 3-4zM-5-1h2v2h-2zM-3-4h2v3h-2zM1-4h2v3h-2zM3-1h2v2h-2z',
  dot: 'M-3 0a3 3 0 1 0 6 0a3 3 0 1 0-6 0z'
};

// x y radius strength, in tile units with the radius in map pixels
const HEAT = {
  a: `1070 960 14 40 1185 1035 18 45 1260 1085 18 45 1270 925 18 45 1330 940 22 50 1290 910 16 35 1420 925 15 40 1330 990 20 75 1365 1045 18 70 1390 1110 17 75 1400 1150 18 45 1440 975 15 40
      1320 1235 16 55 1400 1235 14 35 1470 1240 20 65 1545 1200 18 90 1530 1250 20 92 1540 1300 22 96 1530 1280 18 90 1430 1310 17 50 1370 1360 15 25 600 1200 12 22 610 1310 15 45 625 1350 20 50 610 1375 16 45 1550 960 20 50 1540 1110 20 60 1530 1050 17 50`,
  b: `50 970 24 55 185 965 13 40 75 1078 20 95 95 1070 15 60 20 1110 20 65 40 1200 20 90 30 1260 22 96 20 1290 20 96 70 1190 18 55 92 1320 17 95 100 1280 18 60 180 1350 18 60 250 1385 16 85 280 1310 14 38 60 1250 26 55
      300 1118 22 97 370 1118 22 96 335 1160 22 70 300 1100 24 45 380 1110 25 45 380 1235 18 42 245 1195 12 32 300 970 12 20 365 725 11 35 365 640 13 20 450 800 23 48 480 870 18 45 555 880 22 58 610 930 24 46 600 880 20 40 520 1050 18 40 610 1045 14 35
      460 760 14 28 580 685 18 96 580 685 26 50 660 525 20 72 690 490 22 45 650 510 22 40 830 525 22 48 790 430 18 40 880 560 14 40 905 400 18 40 945 400 14 35 965 130 15 38 850 170 12 34 1100 250 19 60 1150 310 18 42 1030 250 15 20
      830 640 15 38 880 650 18 38 980 645 22 52 1040 660 20 42 940 700 17 36 1000 760 22 40 880 800 20 38 870 860 18 36 795 805 14 36 720 885 14 25 700 640 14 20 825 990 20 94 830 1020 22 60 815 960 22 50 1030 840 22 64 960 860 22 42 920 920 22 45 1000 910 26 48 1100 925 20 74 930 990 16 40
      740 1060 18 44 760 1100 22 45 850 1120 22 66 850 1180 20 55 920 1120 26 45 1010 1090 26 46 1060 1040 26 62 960 1170 26 44 1040 1170 26 40 1110 1180 28 40 1130 1080 22 48 1140 1000 24 62 1150 870 20 60 1140 820 20 50 1140 700 22 46 1130 620 18 30 1090 1230 22 34
      780 1235 20 95 800 1240 20 60 880 1280 18 74 720 1320 22 95 745 1350 22 95 700 1300 20 60 680 1350 26 55 630 1280 22 45 660 1195 22 42 820 1350 24 48 600 1280 14 35 880 1240 20 40 980 1240 20 30 1100 1310 20 22 1150 1310 16 24 500 1320 12 12 400 1320 14 16
      1060 450 20 38 1090 380 20 38 1200 230 25 40 1290 240 28 42 1400 250 28 50 1440 210 22 50 1450 260 18 38 1370 170 19 92 1370 170 25 40 1190 120 17 30 1310 50 18 74 1300 90 22 40 1210 70 18 30 1520 50 18 35 1555 160 18 35 1340 300 24 42
      1250 340 24 64 1280 405 17 90 1280 405 24 45 1220 450 22 66 1165 485 18 94 1185 525 16 84 1150 510 24 50 1280 525 20 76 1390 480 20 90 1420 520 20 90 1350 570 23 97 1340 600 24 95 1290 605 17 90 1380 560 18 85 1360 430 26 45 1370 370 24 44 1200 380 24 42 1100 460 22 42 1110 560 22 44 1180 590 24 44 1450 470 22 55 1450 570 24 50 1260 570 26 50 1530 520 17 94 1530 520 24 50 1540 370 20 54 1540 430 16 40 1100 610 15 30 1240 690 18 35
      1420 680 22 44 1465 710 22 90 1490 750 25 98 1530 790 24 98 1480 790 22 80 1390 780 20 94 1380 810 18 92 1400 740 22 60 1320 800 20 50 1430 850 20 60 1385 880 20 96 1310 930 24 97 1350 960 26 97 1400 940 22 90 1340 990 24 97 1400 1000 26 95 1400 1050 20 92 1310 1040 20 80 1270 930 24 55 1250 1000 26 56 1440 1000 26 70 1290 1080 24 50 1400 1100 22 72 1480 1060 22 48 1530 960 20 70 1500 900 28 65 1540 880 26 70 1540 1010 24 50 1260 1060 22 48 1200 1080 26 45 1220 1010 22 45 1350 1100 22 48 1400 1140 22 50
      1290 1200 18 30 1430 1235 17 70 1430 1270 20 42 1400 1330 20 42 1460 1150 22 50 1500 1190 28 46 1540 1260 26 46 1530 1350 20 38 1290 1330 12 18 460 940 16 28 1200 540 24 44`,
  c: `40 50 24 46 140 50 20 44 200 90 16 42 40 160 20 42 330 50 18 35 70 210 13 20 460 95 24 97 470 130 21 96 475 170 18 94 440 100 26 50 400 150 20 50 500 230 18 76 400 90 20 50 500 110 24 50 655 165 18 94 655 165 25 55 700 150 25 50 620 220 22 50 700 80 24 42 560 140 22 42 600 180 24 40 740 170 14 32 800 50 14 38 850 60 10 15 920 130 17 38 1140 130 16 38 1050 90 10 18
      190 330 17 80 195 290 20 66 270 240 22 58 320 285 18 62 180 240 24 44 240 290 26 45 360 300 24 44 290 400 17 72 225 410 17 68 320 365 16 62 280 445 16 66 230 460 18 58 330 420 26 45 170 180 16 38 40 365 20 54 60 430 18 40 120 400 24 38
      455 330 24 55 535 330 18 97 535 330 24 45 420 400 26 48 400 470 28 50 380 540 26 42 450 440 24 42 500 380 26 45 460 270 22 40 580 240 22 38 580 330 26 44 655 280 24 54 690 330 22 54 630 380 26 44 680 450 20 76 740 370 20 64 710 410 24 44 600 470 24 50 540 440 26 44 560 500 24 44 800 400 22 58 830 450 22 46 870 490 20 54 820 340 20 42 810 285 22 42 780 360 20 38
      910 210 22 66 860 230 22 44 840 200 16 35 960 240 22 38 990 200 18 30 890 290 18 30 920 370 22 76 960 330 22 52 1015 370 22 76 1045 340 22 72 1000 410 22 52 1080 380 28 54 1070 290 24 50 1070 250 16 38 1130 380 26 44 1130 340 24 38 1080 430 20 58 1060 480 20 54 1170 430 24 34 1230 330 18 78 1230 335 24 32 1290 450 15 35 1260 500 22 55 1165 525 24 62 1200 525 22 45 1110 520 16 38
      110 480 20 94 80 500 20 97 70 520 16 95 15 520 17 90 80 565 16 86 145 485 18 80 200 525 14 92 200 565 15 76 135 605 15 97 200 643 14 98 255 605 15 72 135 723 14 97 70 470 26 50 30 600 24 52 170 540 28 40 200 600 28 40 120 640 28 46 60 640 26 46 180 680 24 46 90 700 24 48 30 700 26 58 110 760 22 45 230 560 26 42 240 630 20 40 20 780 25 97 40 800 18 90 10 760 20 95 70 800 22 45
      20 870 24 68 30 930 22 60 15 960 20 78 70 880 18 45 80 850 22 40 10 1010 18 52 60 1040 14 22 430 560 26 42 490 550 20 35 580 560 24 50 595 600 20 66 580 650 22 42 560 700 30 54 620 700 22 45 640 640 18 38 690 640 20 42 690 725 18 38 720 520 18 88 718 570 18 82 770 570 18 72 720 540 26 50 790 600 22 46 820 580 16 36 860 630 10 20 940 500 18 38 960 560 20 35 1010 570 18 40 1020 600 14 30
      430 690 18 72 440 720 18 74 465 760 18 80 440 790 22 46 480 800 20 46 410 650 14 34 330 720 22 48 320 780 22 42 300 830 20 42 260 880 18 42 230 885 12 34 310 930 22 62 320 920 18 60 395 920 17 90 350 920 20 60 400 980 20 60 405 1030 19 60 410 1110 20 56 370 980 22 40 440 1060 20 40 470 940 18 40
      510 950 19 97 530 970 19 97 545 1000 16 90 520 960 28 50 500 900 22 42 560 1080 21 76 550 1060 26 46 540 1120 20 36 620 810 20 74 690 840 24 72 680 840 20 55 560 850 22 48 590 880 20 42 640 790 24 42 730 840 22 46 690 920 20 70 670 960 22 55 640 980 22 44 600 1000 14 28 780 920 20 50 800 930 16 38 710 970 16 34
      880 730 14 12 940 830 18 30 960 880 16 35 865 960 17 48 870 1000 20 52 868 1045 18 64 950 780 16 25 1060 800 15 30 1080 960 16 95 1135 960 17 90 1080 960 24 45 1140 950 26 45 1180 940 26 44 1230 930 24 44 1270 960 20 38 1110 1040 22 54 1060 1030 22 42 1050 1110 22 60 1020 1080 22 42 1080 1100 20 40 1200 1040 18 46 1280 1040 14 34 1350 960 13 30 1160 880 14 22 1370 880 18 36
      1160 1110 20 38 1090 1195 17 88 1080 1190 22 55 1110 1230 22 50 1060 1160 16 38 1000 1200 22 50 960 1190 14 34 900 1200 18 58 880 1240 14 38 1170 1240 18 44 1200 1280 16 38 1290 1280 13 32 1280 1160 19 50 1290 1190 18 48 1240 1150 12 24 1400 1040 20 46 1440 1060 20 46 1430 1100 16 32 1480 1060 16 35 1420 1160 11 18 1490 1160 11 20
      1150 600 18 38 1170 640 18 34 1130 690 18 36 1200 680 16 34 1240 720 13 25 1100 710 12 25 1330 690 13 22 1390 760 16 32 1420 740 14 28 1470 605 13 30 1380 600 12 14 1500 700 18 40 1510 680 14 34 1330 600 10 12 1540 720 20 40
      690 1100 20 55 720 1110 22 58 740 1120 18 45 800 1160 18 46 660 1200 20 46 620 1220 16 40 780 1280 18 80 780 1280 26 42 720 1240 18 38 650 1310 19 76 630 1320 25 48 680 1330 20 40 780 1060 14 24 770 1010 13 24 940 1315 22 66 920 1290 22 45 970 1340 22 40 930 1370 22 55 880 1370 16 30
      235 1040 18 44 210 1040 14 25 350 1280 19 60 330 1240 22 38 400 1280 18 34 400 1330 20 40 470 1350 20 42 350 1370 22 40 440 1370 24 48 540 1380 20 44 130 1160 18 36 150 1200 12 18 20 1220 22 42 30 1290 25 46 10 1350 24 42 270 1230 14 18 1140 1330 12 24 1410 1360 10 12 1480 1370 10 18 400 1160 14 26 540 1200 10 15 1050 880 10 12`,
  d: `0 700 22 42 20 740 17 34 50 800 15 38 90 850 12 22 165 880 12 28 165 960 13 36 80 1000 13 28 10 1030 18 40 0 1080 18 38 105 1115 17 56 100 1090 16 35 50 1160 14 38 75 1210 14 34 170 1160 11 15 248 1115 17 56 248 1145 15 38 240 1235 16 40 275 1320 13 34 275 1355 14 38 190 1355 14 36 0 1160 10 22 50 1320 10 18 20 1385 14 40`
};

const heat = document.getElementById('heat');
for (const tile in HEAT) {
  const n = HEAT[tile].trim().split(/\s+/).map(Number);
  for (let i = 0; i < n.length; i += 4) {
    const [cx, cy] = at(tile, n[i], n[i + 1]);
    add(heat, 'circle', { cx, cy, r: n[i + 2], fill: 'url(#spot)', 'fill-opacity': n[i + 3] / 100 });
  }
}

const labels = document.getElementById('labels');
for (const [tile, x, y, text, interstate] of SHIELDS) {
  const [cx, cy] = at(tile, x, y);
  if (interstate) {
    add(labels, 'path', { d: `M${cx - 9} ${cy - 6}h18v5q0 5-9 8q-9-3-9-8z`, fill: '#3f75c4' });
    add(labels, 'path', { d: `M${cx - 8} ${cy - 7}h16v3h-16z`, fill: '#dc5852' });
  } else {
    const w = text.length > 2 ? 17 : 14;
    add(labels, 'rect', { x: cx - w / 2, y: cy - 6, width: w, height: 12, rx: 5, fill: '#fff', stroke: '#777' });
  }
  add(labels, 'text', { x: cx, y: cy + 3, class: interstate ? 'lbl-interstate' : 'lbl-shield' }, text);
}
// Names that sit to the left of their pin keep clear of it.
const pinFollows = (tile, x, y) => PINS.some(([t, px, py]) => t === tile && px - x > 100 && px - x < 460 && Math.abs(py - y) < 50);
for (const [tile, x, y, kind, text, turn] of LABELS) {
  const [left, ty] = at(tile, x, y);
  const tx = kind.startsWith('poi') && pinFollows(tile, x, y) ? left - 3 : left;
  const attrs = { x: tx, y: ty, class: kind ? `lbl lbl-${kind}` : 'lbl' };
  if (turn) attrs.transform = `rotate(${turn} ${tx} ${ty})`;
  add(labels, 'text', attrs, text);
}

const pins = document.getElementById('pins');
for (const [tile, x, y, colour, glyph] of PINS) {
  const [cx, cy] = at(tile, x, y);
  const pin = add(pins, 'g', { transform: `translate(${cx} ${cy})` });
  add(pin, 'path', { d: 'M-10 0a10 10 0 0 1 20 0c0 6-6 8-10 14c-4-6-10-8-10-14z', fill: '#fff', 'fill-opacity': .8 });
  add(pin, 'circle', { r: 9, fill: colour });
  add(pin, 'path', { d: GLYPHS[glyph], fill: '#fff' });
}
const [sx, sy] = at('b', 530, 348);
add(pins, 'rect', { x: sx - 5, y: sy - 6, width: 11, height: 12, rx: 3, fill: '#566f88' });
add(pins, 'path', { d: `M${sx - 2} ${sy - 4}h5v6h-5zM${sx - 3} ${sy + 4}l2-2M${sx + 4} ${sy + 4}l-2-2`, fill: 'none', stroke: '#fff' });
for (const [tile, x, y] of [['b', 571, 348], ['b', 861, 553], ['b', 1330, 1146]]) {
  const [cx, cy] = at(tile, x, y);
  add(pins, 'circle', { cx, cy, r: 4, fill: '#fff', stroke: '#444', 'stroke-width': 1.5 });
  add(pins, 'circle', { cx: cx + 1, cy, r: 1, fill: '#c33' });
}
```
